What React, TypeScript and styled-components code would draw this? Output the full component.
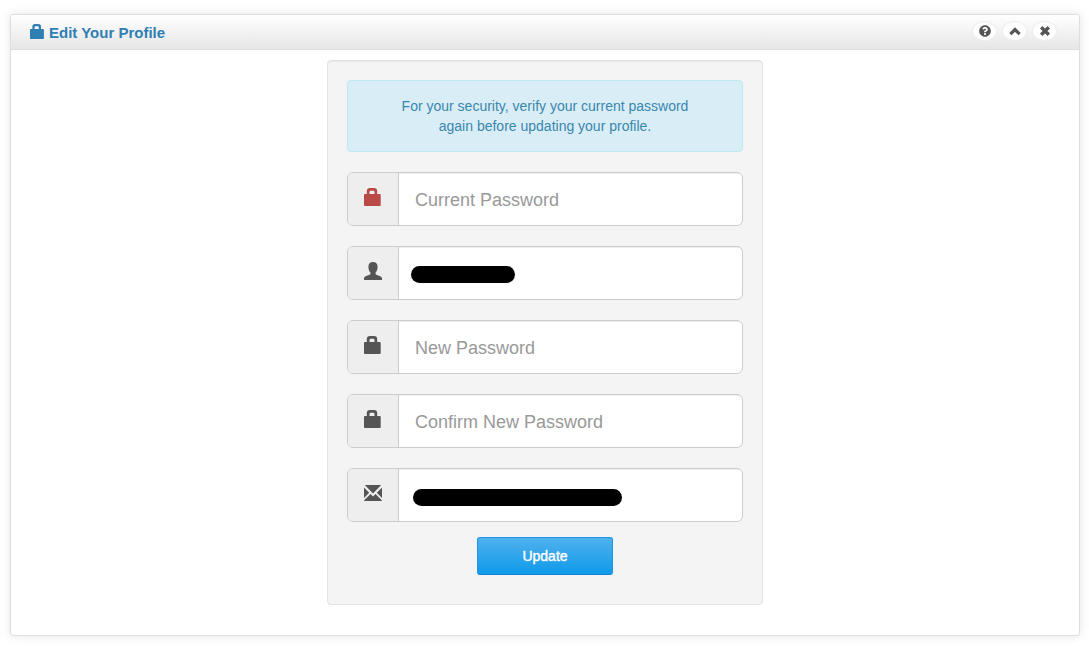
import React from 'react';
import styled, { createGlobalStyle } from 'styled-components';
import { FaQuestionCircle } from 'react-icons/fa';

const GlobalStyle = createGlobalStyle`
  *, *::before, *::after { box-sizing: border-box; }
  body {
    margin: 0;
    background: #fff;
    color: #555;
    font-family: "Liberation Sans", Arial, sans-serif;
    font-size: 14px;
    line-height: 20px;
  }
`;

const Page = styled.main`
  padding: 14px 9px 10px 10px;
`;

const Panel = styled.section`
  border: 1px solid #dedede;
  border-radius: 3px;
  background: #fff;
  box-shadow: 0 0 10px rgba(189, 189, 189, 0.4);
`;

const PanelHeader = styled.header`
  display: flex;
  justify-content: space-between;
  align-items: flex-start;
  height: 35px;
  padding: 6px 22px 0 19px;
  border-bottom: 1px solid #dedede;
  border-radius: 3px 3px 0 0;
  background: linear-gradient(to bottom, #fff, #e6e6e6);
`;

const PanelTitle = styled.h2`
  display: flex;
  gap: 4px;
  margin: 0;
  padding-top: 2px;
  color: #2f7fb3;
  font-size: 15px;
  line-height: 20px;
  font-weight: bold;

  svg { margin-top: 1px; }
`;

const PanelActions = styled.div`
  display: flex;
  gap: 5px;
`;

const RoundButton = styled.button`
  display: flex;
  align-items: center;
  justify-content: center;
  width: 25px;
  height: 20px;
  padding: 0;
  border: 1px solid #ededed;
  border-radius: 50%;
  background: #fefefe;
  color: #555;
  cursor: pointer;
`;

const PanelBody = styled.div`
  padding: 10px 10px 30px;
`;

const ProfileForm = styled.form`
  display: flex;
  flex-direction: column;
  gap: 20px;
  max-width: 436px;
  margin: 0 auto;
  padding: 19px 19px 29px;
  border: 1px solid #e3e3e3;
  border-radius: 4px;
  background: #f4f4f4;
  box-shadow: inset 0 1px 1px rgba(0, 0, 0, 0.05);
`;

const Notice = styled.p`
  margin: 0;
  padding: 15px 50px;
  border: 1px solid #bce8f1;
  border-radius: 4px;
  background: #d9edf7;
  color: #3a87ad;
  text-align: center;
`;

const Field = styled.div`
  position: relative;
  display: flex;
  height: 54px;
  border: 1px solid #ccc;
  border-radius: 6px;
  background: #fff;
  overflow: hidden;
`;

const FieldIcon = styled.label<{ $alert?: boolean }>`
  flex: none;
  width: 51px;
  padding: 15px 16px;
  border-right: 1px solid #ccc;
  background: #eee;
  color: ${(p) => (p.$alert ? '#b94a48' : '#555')};
  line-height: 0;
`;

const FieldInput = styled.input`
  flex: 1;
  min-width: 0;
  padding: 2px 16px 0;
  border: 0;
  background: transparent;
  box-shadow: inset 0 1px 1px rgba(0, 0, 0, 0.075);
  color: #555;
  font-family: inherit;
  font-size: 18px;
  outline: none;

  &::placeholder { color: #999; opacity: 1; }
`;

const Redaction = styled.span<{ $left: number; $top: number; $width: number }>`
  position: absolute;
  left: ${(p) => p.$left}px;
  top: ${(p) => p.$top}px;
  width: ${(p) => p.$width}px;
  height: 17px;
  border-radius: 9px;
  background: #000;
  pointer-events: none;
`;

const SubmitButton = styled.button`
  align-self: center;
  width: 136px;
  height: 38px;
  margin-top: -5px;
  padding: 0;
  border: 1px solid #1a97e2;
  border-bottom-color: #0b85cd;
  border-radius: 3px;
  background: linear-gradient(to bottom, #4fb1ee, #0f9aea);
  color: #fff;
  font-family: inherit;
  font-size: 14px;
  line-height: 20px;
  -webkit-text-stroke: 0.4px #fff;
  text-shadow: 0 -1px 0 rgba(0, 0, 0, 0.1);
  cursor: pointer;
`;

const LockIcon = ({ size = 18 }: { size?: number }) => (
  <svg width={size} height={size} viewBox="0 0 18 18" fill="currentColor" aria-hidden="true">
    <path
      fillRule="evenodd"
      d="M1 6H2.8V3.2Q2.8 0 6 0H10Q13.2 0 13.2 3.2V6H15.7Q16.7 6 16.7 7V17Q16.7 18 15.7 18H1Q0 18 0 17V7Q0 6 1 6ZM5.5 6H10.5V4Q10.5 2.8 9.3 2.8H6.7Q5.5 2.8 5.5 4Z"
    />
  </svg>
);

const UserIcon = () => (
  <svg width="18" height="18" viewBox="0 0 18 18" fill="currentColor" aria-hidden="true">
    <path d="M9 0C12.1 0 13.6 1.8 13.6 4.8C13.6 7.4 12.8 9.4 11.6 10.5V12.3C12.2 13.2 18 14.2 18 16.2V18H0V16.2C0 14.2 5.8 13.2 6.4 12.3V10.5C5.2 9.4 4.4 7.4 4.4 4.8C4.4 1.8 5.9 0 9 0Z" />
  </svg>
);

const MailIcon = () => (
  <svg width="18" height="18" viewBox="0 0 18 18" fill="currentColor" aria-hidden="true">
    <path d="M0.8 1H17.2L9 9.4ZM0 3.4L5.2 8.7L0 13.9ZM18 3.4V13.9L12.8 8.7ZM6.5 10L9 12.4L11.5 10L17.8 16.3V17H0.2V16.3Z" />
  </svg>
);

const ChevronUpIcon = () => (
  <svg width="12" height="12" viewBox="0 0 12 12" fill="none" stroke="currentColor" strokeWidth="3.2" aria-hidden="true">
    <path d="M1.4 9.2L6 4.6L10.6 9.2" />
  </svg>
);

const CloseIcon = () => (
  <svg width="12" height="12" viewBox="0 0 12 12" fill="none" stroke="currentColor" strokeWidth="3.4" aria-hidden="true">
    <path d="M2.2 2.2L9.8 9.8M9.8 2.2L2.2 9.8" />
  </svg>
);

export default function App() {
  return (
    <>
      <GlobalStyle />
      <Page>
        <Panel>
          <PanelHeader>
            <PanelTitle>
              <LockIcon size={15} />
              Edit Your Profile
            </PanelTitle>
            <PanelActions>
              <RoundButton type="button" aria-label="Help"><FaQuestionCircle size={12} /></RoundButton>
              <RoundButton type="button" aria-label="Collapse"><ChevronUpIcon /></RoundButton>
              <RoundButton type="button" aria-label="Close"><CloseIcon /></RoundButton>
            </PanelActions>
          </PanelHeader>
          <PanelBody>
            <ProfileForm onSubmit={(e) => e.preventDefault()}>
              <Notice>For your security, verify your current password again before updating your profile.</Notice>
              <Field>
                <FieldIcon htmlFor="current" aria-label="Current Password" $alert><LockIcon /></FieldIcon>
                <FieldInput id="current" type="password" placeholder="Current Password" />
              </Field>
              <Field>
                <FieldIcon htmlFor="username" aria-label="Username"><UserIcon /></FieldIcon>
                <FieldInput id="username" type="text" />
                <Redaction $left={63} $top={19} $width={104} />
              </Field>
              <Field>
                <FieldIcon htmlFor="new" aria-label="New Password"><LockIcon /></FieldIcon>
                <FieldInput id="new" type="password" placeholder="New Password" />
              </Field>
              <Field>
                <FieldIcon htmlFor="confirm" aria-label="Confirm New Password"><LockIcon /></FieldIcon>
                <FieldInput id="confirm" type="password" placeholder="Confirm New Password" />
              </Field>
              <Field>
                <FieldIcon htmlFor="email" aria-label="Email"><MailIcon /></FieldIcon>
                <FieldInput id="email" type="email" />
                <Redaction $left={65} $top={20} $width={209} />
              </Field>
              <SubmitButton type="submit">Update</SubmitButton>
            </ProfileForm>
          </PanelBody>
        </Panel>
      </Page>
    </>
  );
}
